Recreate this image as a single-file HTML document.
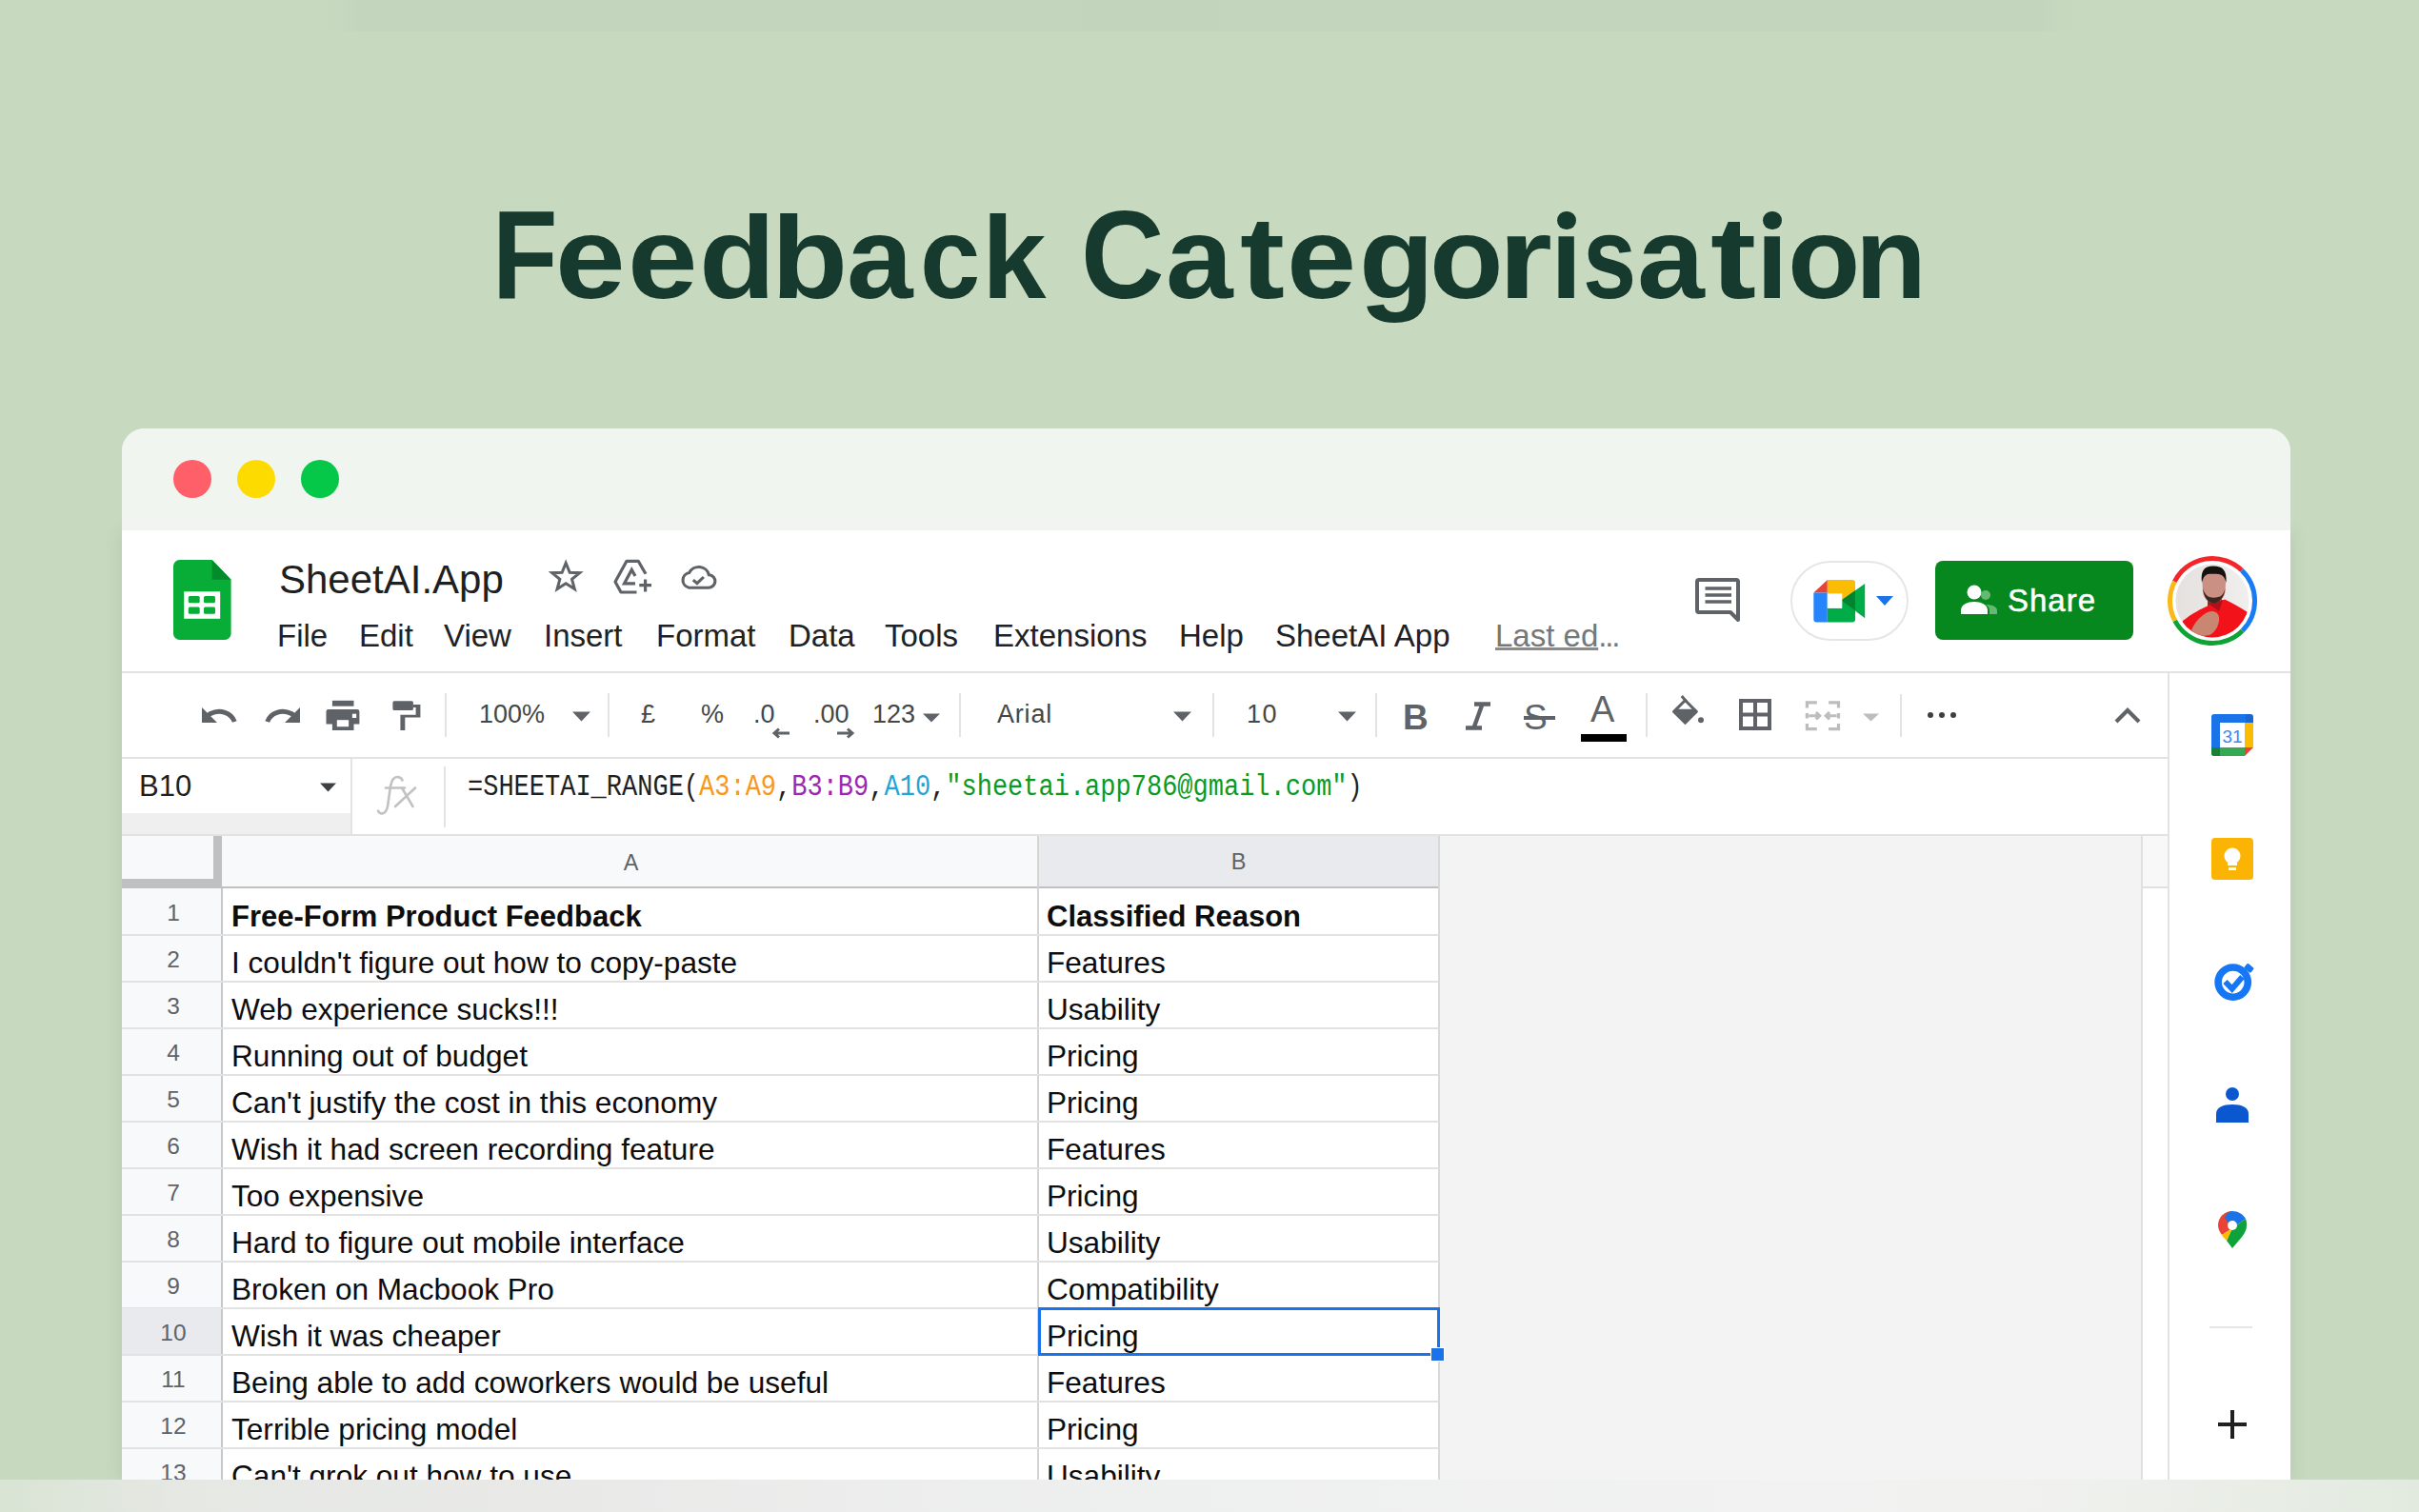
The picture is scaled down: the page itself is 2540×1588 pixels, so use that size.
<!DOCTYPE html>
<html><head><meta charset="utf-8">
<style>
*{margin:0;padding:0;box-sizing:border-box}
html,body{width:2540px;height:1588px;overflow:hidden}
body{position:relative;background:#c7dac0;font-family:"Liberation Sans",sans-serif;color:#202124}
.a{position:absolute}
.t{position:absolute;white-space:nowrap;line-height:1;-webkit-font-smoothing:antialiased}
.hl{position:absolute;background:#e2e2e2}
#topband{left:0;top:0;width:2540px;height:33px;background:linear-gradient(90deg,rgba(0,0,0,0) 0px,rgba(0,0,0,0) 340px,#c4d5bd 380px,#c3d4bc 1200px,#c4d5bd 2140px,rgba(0,0,0,0) 2180px)}
.tl{position:absolute;white-space:nowrap;line-height:1;font-weight:bold;color:#173a2e;transform-origin:0 0}
#win{left:128px;top:450px;width:2277px;height:1104px;background:#fff;border-radius:24px 24px 0 0;overflow:hidden}
#titlebar{left:0;top:0;width:2277px;height:107px;background:#f0f5f0}
.dot{position:absolute;width:40px;height:40px;border-radius:50%;top:33px}
#bottomband{left:0;top:1554px;width:2540px;height:34px;background:linear-gradient(90deg,#d9e4d4 0px,#e6e8e4 200px,#e9eae8 600px,#eeefef 1200px,#f2f2f2 1900px,#f0f1ee 2150px,#e2eadf 2540px)}
.menu{font-size:33px;color:#202124}
.cell{font-size:31.6px;color:#0d0d0d}
.rn{font-size:24.5px;color:#5f6368;text-align:center;width:104px}
.tb{font-size:27px;color:#444746}
.ic{position:absolute}
</style></head><body>
<div id="topband" class="a"></div>
<div id="ttl"><span class="tl" style="left:517.4px;top:202.2px;font-size:131px;transform:scaleX(0.855)">F</span><span class="tl" style="left:583.2px;top:208.7px;font-size:123px;transform:scaleX(1.076)">e</span><span class="tl" style="left:659.2px;top:208.7px;font-size:123px;transform:scaleX(1.075)">e</span><span class="tl" style="left:734.1px;top:208.7px;font-size:123px;transform:scaleX(1.068)">d</span><span class="tl" style="left:810.3px;top:208.7px;font-size:123px;transform:scaleX(1.066)">b</span><span class="tl" style="left:888.8px;top:208.7px;font-size:123px;transform:scaleX(1.017)">a</span><span class="tl" style="left:966.3px;top:208.7px;font-size:123px;transform:scaleX(0.927)">c</span><span class="tl" style="left:1030.8px;top:208.7px;font-size:123px;transform:scaleX(0.986)">k</span><span class="tl" style="left:1134.7px;top:202.2px;font-size:131px;transform:scaleX(0.926)">C</span><span class="tl" style="left:1224.1px;top:208.7px;font-size:123px;transform:scaleX(1.032)">a</span><span class="tl" style="left:1302.3px;top:208.7px;font-size:123px;transform:scaleX(1.146)">t</span><span class="tl" style="left:1351.0px;top:208.7px;font-size:123px;transform:scaleX(1.069)">e</span><span class="tl" style="left:1426.5px;top:208.7px;font-size:123px;transform:scaleX(1.050)">g</span><span class="tl" style="left:1501.0px;top:208.7px;font-size:123px;transform:scaleX(1.032)">o</span><span class="tl" style="left:1572.8px;top:208.7px;font-size:123px;transform:scaleX(1.189)">r</span><span class="tl" style="left:1628.1px;top:208.7px;font-size:123px;transform:scaleX(0.971)">ı</span><div class="a" style="left:1635.4px;top:221.7px;width:19.4px;height:19.4px;border-radius:50%;background:#173a2e"></div><span class="tl" style="left:1661.6px;top:208.7px;font-size:123px;transform:scaleX(0.821)">s</span><span class="tl" style="left:1718.5px;top:208.7px;font-size:123px;transform:scaleX(1.034)">a</span><span class="tl" style="left:1795.7px;top:208.7px;font-size:123px;transform:scaleX(1.173)">t</span><span class="tl" style="left:1844.0px;top:208.7px;font-size:123px;transform:scaleX(0.976)">ı</span><div class="a" style="left:1851.4px;top:221.7px;width:19.4px;height:19.4px;border-radius:50%;background:#173a2e"></div><span class="tl" style="left:1876.7px;top:208.7px;font-size:123px;transform:scaleX(1.017)">o</span><span class="tl" style="left:1948.2px;top:208.7px;font-size:123px;transform:scaleX(0.997)">n</span></div>

<div class="a" style="left:128px;top:560px;width:2277px;height:994px;box-shadow:0 0 16px 2px rgba(50,80,40,0.10)"></div>
<div id="win" class="a">
  <div id="titlebar" class="a">
    <div class="dot" style="left:54px;background:#ff5f69"></div>
    <div class="dot" style="left:121px;background:#fedb00"></div>
    <div class="dot" style="left:188px;background:#05c848"></div>
  </div>
</div>

<!-- header -->
<svg class="ic" style="left:182px;top:588px" width="61" height="85" viewBox="0 0 61 85">
  <path d="M6.6 0 H40.6 L60.6 20.8 V77.4 A6.6 6.6 0 0 1 54 84 H6.6 A6.6 6.6 0 0 1 0 77.4 V6.6 A6.6 6.6 0 0 1 6.6 0Z" fill="#07ad37"/>
  <path d="M40.6 0 V20.8 H60.6Z" fill="#038a2b"/>
  <rect x="11.2" y="33.3" width="38" height="28.5" fill="#fff"/>
  <rect x="15.8" y="38" width="11.9" height="7.2" rx="1.5" fill="#07ad37"/>
  <rect x="32" y="38" width="12" height="7.2" rx="1.5" fill="#07ad37"/>
  <rect x="15.8" y="49.5" width="11.9" height="7.2" rx="1.5" fill="#07ad37"/>
  <rect x="32" y="49.5" width="12" height="7.2" rx="1.5" fill="#07ad37"/>
</svg>
<div class="t" style="left:293px;top:588px;font-size:42px;color:#1f1f1f">SheetAI.App</div>

<div class="t menu" style="left:291px;top:651px">File</div>
<div class="t menu" style="left:377px;top:651px">Edit</div>
<div class="t menu" style="left:466px;top:651px">View</div>
<div class="t menu" style="left:571px;top:651px">Insert</div>
<div class="t menu" style="left:689px;top:651px">Format</div>
<div class="t menu" style="left:828px;top:651px">Data</div>
<div class="t menu" style="left:929px;top:651px">Tools</div>
<div class="t menu" style="left:1043px;top:651px">Extensions</div>
<div class="t menu" style="left:1238px;top:651px">Help</div>
<div class="t menu" style="left:1339px;top:651px">SheetAI App</div>
<div class="t menu" style="left:1570px;top:651px;color:#777"><span style="text-decoration:underline;text-decoration-thickness:2.5px;text-underline-offset:1px;text-decoration-color:#8a8a8a">Last ed</span><span style="letter-spacing:-2.2px">...</span></div>


<!-- header icons -->
<svg class="ic" style="left:574px;top:586px" width="40" height="38" viewBox="0 0 40 38">
  <g transform="matrix(0.88,0,0,0.883,2.59,2.59)"><path d="M20 3 L24.6 14.3 L36.5 14.8 L27.2 22.3 L30.4 34 L20 27.4 L9.6 34 L12.8 22.3 L3.5 14.8 L15.4 14.3Z" fill="none" stroke="#5f6368" stroke-width="3.4" stroke-linejoin="miter"/></g>
</svg>
<svg class="ic" style="left:642px;top:586px" width="46" height="40" viewBox="0 0 46 40">
  <path d="M36 16.8 L28.2 3.3 H16 L4 25 L10 36 H26.5" fill="none" stroke="#5f6368" stroke-width="3.2" stroke-linejoin="round"/>
  <path d="M25 19 L21.3 12.4 L13.5 26.8 H25" fill="none" stroke="#5f6368" stroke-width="3.2" stroke-linejoin="miter"/>
  <path d="M35.6 22.5 V35.5 M29.3 28.7 H42" fill="none" stroke="#5f6368" stroke-width="3.2"/>
</svg>
<svg class="ic" style="left:713px;top:591px" width="42" height="30" viewBox="0 0 42 30">
  <g transform="matrix(0.923,0,0,0.89,0.954,3)"><path d="M10 26 H32 A7.5 7.5 0 0 0 33 11 A12 12 0 0 0 10.5 8.5 A9 9 0 0 0 10 26Z" fill="none" stroke="#5f6368" stroke-width="3.4"/>
  <path d="M15 17 L19.5 21 L27 13.5" fill="none" stroke="#5f6368" stroke-width="3.4"/></g>
</svg>

<!-- comment icon -->
<svg class="ic" style="left:1779px;top:605px" width="51" height="50" viewBox="0 0 51 50">
  <path d="M5 4 H44 A2 2 0 0 1 46 6 V46 L38 38 H5 A2 2 0 0 1 3 36 V6 A2 2 0 0 1 5 4Z" fill="none" stroke="#5f6368" stroke-width="4" stroke-linejoin="round"/>
  <path d="M11.5 13 H39 M11.5 20 H39 M11.5 27 H39" stroke="#5f6368" stroke-width="3.4"/>
</svg>

<!-- meet pill -->
<div class="a" style="left:1880px;top:589px;width:124px;height:84px;border:2.5px solid #e6e6e6;border-radius:42px"></div>
<svg class="ic" style="left:1904px;top:607px" width="58" height="48" viewBox="0 0 58 48">
  <path d="M0.35 15.4 L14.8 1.9 V15.4Z" fill="#ea4335"/>
  <path d="M14.8 1.9 H41 A3 3 0 0 1 44 4.9 V23.6 H14.8Z" fill="#fbbc04"/>
  <path d="M0.35 15.4 H14.8 V46.4 H3.35 A3 3 0 0 1 0.35 43.4Z" fill="#2684fc"/>
  <path d="M14.8 23.6 H44 V43.4 A3 3 0 0 1 41 46.4 H14.8Z" fill="#00ac47"/>
  <path d="M29.4 23.6 L54.2 6 V42.2Z" fill="#00ac47"/>
  <path d="M29.4 23.6 L44 13.2 V34Z" fill="#00832d"/>
  <rect x="14.8" y="16.4" width="15.5" height="15.5" fill="#fff"/>
</svg>
<svg class="ic" style="left:1969px;top:625px" width="20" height="12" viewBox="0 0 20 12"><path d="M1 1 H19 L10 11Z" fill="#1a73e8"/></svg>

<!-- share -->
<div class="a" style="left:2032px;top:589px;width:208px;height:83px;background:#07881f;border-radius:8px"></div>
<svg class="ic" style="left:2056px;top:612px" width="44" height="36" viewBox="0 0 44 36">
  <circle cx="17" cy="10" r="7.5" fill="#fff"/>
  <path d="M3 33 V29 C3 23 10 20 17 20 C24 20 31 23 31 29 V33Z" fill="#fff"/>
  <circle cx="29" cy="13" r="5" fill="#7dc58a" opacity="0.8"/>
  <path d="M33 33 V29 C33 26 31 24 29 23 C35 23 41 25 41 29 V33Z" fill="#7dc58a" opacity="0.8"/>
</svg>
<div class="t" style="left:2108px;top:614px;font-size:33px;color:#fff;-webkit-text-stroke:0.5px #fff;letter-spacing:1px">Share</div>

<!-- avatar -->
<svg class="ic" style="left:2274px;top:582px" width="98" height="98" viewBox="0 0 98 98">
  <defs><clipPath id="avc"><circle cx="49" cy="49" r="38.5"/></clipPath>
  <linearGradient id="avbg" x1="0" x2="1" y1="0" y2="0"><stop offset="0" stop-color="#e2dfdc"/><stop offset="1" stop-color="#f2f1ef"/></linearGradient></defs>
  <g fill="none" stroke-width="5">
  <path d="M9.35 28.8 A44.5 44.5 0 0 1 79.9 17" stroke="#f4262a"/>
  <path d="M79.9 17 A44.5 44.5 0 0 1 80.5 80.5" stroke="#1a7cf2"/>
  <path d="M80.5 80.5 A44.5 44.5 0 0 1 9.7 69.9" stroke="#0fa336"/>
  <path d="M9.7 69.9 A44.5 44.5 0 0 1 9.35 28.8" stroke="#fbb81b"/>
  </g>
  <g clip-path="url(#avc)">
    <rect x="0" y="0" width="98" height="98" fill="url(#avbg)"/>
    <path d="M44 44 H59 V56 H44Z" fill="#7a3a30"/>
    <path d="M12 100 L18 70 C28 62 38 57 45 54 L62 47.5 C70 51 78 56 86 61 L94 100Z" fill="#f2121a"/>
    <path d="M45 52 L60 48 L56 60 Z" fill="#b0101a"/>
    <path d="M27 80 C30 72 36 66 42 62 C48 58 55 60 56 66 C57 74 52 82 46 85 C38 87 31 85 27 80Z" fill="#c98670"/>
    <path d="M38.5 30 C38 22 42 17 50.5 17 C59 17 63.5 22 63 30 L62.5 40 C61 47 56 51 50.5 51 C45 51 40 47 39 40Z" fill="#c99083"/>
    <path d="M39 36 C40 45 44 51 50.5 51.5 C57 51 61.5 45 62.5 36 C61 42 58 45 55 45 C52 46 49 46 46 45 C43 44 40.5 41 39 36Z" fill="#3e2620"/>
    <path d="M38 30 C36.5 18 40 12.5 50 12.5 C60 12.5 64.5 17 63.5 30 C62 24 60 22 56 21 C52 20.5 47 20.5 44 21 C41 22 39 25 38 30Z" fill="#17120f"/>
  </g>
</svg>

<div class="hl" style="left:128px;top:705px;width:2277px;height:2px"></div>

<!-- toolbar -->
<!-- toolbar icons -->
<svg class="ic" style="left:210px;top:740px" width="42" height="22" viewBox="0 0 42 22">
  <path d="M36.3 18 C33 8.5 21 4.5 11 9.5 L7.5 12" fill="none" stroke="#5f6368" stroke-width="5"/>
  <path d="M2 3 V19 H18 Z" fill="#5f6368"/>
</svg>
<svg class="ic" style="left:275px;top:740px" width="42" height="22" viewBox="0 0 42 22">
  <path d="M5.7 18 C9 8.5 21 4.5 31 9.5 L34.5 12" fill="none" stroke="#5f6368" stroke-width="5"/>
  <path d="M40 3 V19 H24 Z" fill="#5f6368"/>
</svg>
<svg class="ic" style="left:342px;top:735px" width="37" height="33" viewBox="0 0 37 33">
  <rect x="6.9" y="0.8" width="22.6" height="5.9" fill="#5f6368"/>
  <path d="M3 9.9 H33 A2.4 2.4 0 0 1 35.4 12.3 V25.5 H29.5 V31.9 H6.9 V25.5 H0.5 V12.3 A2.4 2.4 0 0 1 3 9.9Z" fill="#5f6368"/>
  <rect x="11.8" y="21.2" width="12.3" height="7" fill="#fff"/>
  <rect x="27.9" y="14.7" width="4.3" height="4.3" fill="#fff"/>
</svg>
<svg class="ic" style="left:412px;top:736px" width="31" height="32" viewBox="0 0 31 32">
  <rect x="0.4" y="0.3" width="21.5" height="9.7" rx="1.5" fill="#5f6368"/>
  <path d="M21.9 4 H29.4 V17.5 H13.3 V31 H8.4 V14.8 H24.6 V7 H21.9Z" fill="#5f6368"/>
</svg>
<div class="a" style="left:467px;top:728px;width:2px;height:46px;background:#e3e3e3"></div>
<div class="t tb" style="left:503px;top:737px">100%</div>
<svg class="ic" style="left:601px;top:747px" width="19" height="11" viewBox="0 0 19 11"><path d="M0 0.5 H19 L9.5 10.5Z" fill="#5f6368"/></svg>
<div class="a" style="left:638px;top:728px;width:2px;height:46px;background:#e3e3e3"></div>
<div class="t tb" style="left:673px;top:737px">£</div>
<div class="t tb" style="left:736px;top:737px">%</div>
<div class="t tb" style="left:791px;top:737px">.0</div>
<svg class="ic" style="left:810px;top:764px" width="19" height="12" viewBox="0 0 19 12"><path d="M19 6 H5 M8 1.5 L3 6 L8 10.5" fill="none" stroke="#5f6368" stroke-width="3"/></svg>
<div class="t tb" style="left:854px;top:737px">.00</div>
<svg class="ic" style="left:879px;top:764px" width="19" height="12" viewBox="0 0 19 12"><path d="M0 6 H14 M11 1.5 L16 6 L11 10.5" fill="none" stroke="#5f6368" stroke-width="3"/></svg>
<div class="t tb" style="left:916px;top:737px">123</div>
<svg class="ic" style="left:969px;top:749px" width="18" height="10" viewBox="0 0 18 10"><path d="M0 0.5 H18 L9 9.5Z" fill="#5f6368"/></svg>
<div class="a" style="left:1007px;top:728px;width:2px;height:46px;background:#e3e3e3"></div>
<div class="t tb" style="left:1047px;top:737px;letter-spacing:0.8px">Arial</div>
<svg class="ic" style="left:1232px;top:747px" width="19" height="11" viewBox="0 0 19 11"><path d="M0 0.5 H19 L9.5 10.5Z" fill="#5f6368"/></svg>
<div class="a" style="left:1273px;top:728px;width:2px;height:46px;background:#e3e3e3"></div>
<div class="t tb" style="left:1309px;top:737px;letter-spacing:1.5px">10</div>
<svg class="ic" style="left:1405px;top:747px" width="19" height="11" viewBox="0 0 19 11"><path d="M0 0.5 H19 L9.5 10.5Z" fill="#5f6368"/></svg>
<div class="a" style="left:1444px;top:728px;width:2px;height:46px;background:#e3e3e3"></div>
<div class="t" style="left:1473px;top:735px;font-size:37px;font-weight:bold;color:#5f6368">B</div>
<svg class="ic" style="left:1537px;top:737px" width="30" height="30" viewBox="0 0 30 30"><path d="M11 2.5 H28 M2 27.5 H19 M19.5 2.5 L10.5 27.5" fill="none" stroke="#5f6368" stroke-width="4.4"/></svg>
<div class="t" style="left:1600px;top:735px;font-size:37px;color:#5f6368">S</div>
<div class="a" style="left:1600px;top:752px;width:33px;height:3.5px;background:#5f6368"></div>
<div class="t" style="left:1670px;top:726px;font-size:38px;color:#5f6368">A</div>
<div class="a" style="left:1660px;top:771px;width:48px;height:8px;background:#000"></div>
<div class="a" style="left:1728px;top:728px;width:2px;height:46px;background:#e3e3e3"></div>
<svg class="ic" style="left:1756px;top:730px" width="36" height="32" viewBox="0 0 36 32">
  <path d="M13.5 5.5 L25.3 17.4 L13.5 29.3 L1.6 17.4Z" fill="none" stroke="#5f6368" stroke-width="3" stroke-linejoin="round"/>
  <path d="M2.5 16.5 L4.5 14.8 H22.5 L24.4 16.5 L13.5 28.4Z" fill="#5f6368"/>
  <path d="M9.8 1 L14.5 6.5" stroke="#5f6368" stroke-width="3"/>
  <circle cx="30" cy="26.3" r="3" fill="#5f6368"/>
</svg>
<svg class="ic" style="left:1826px;top:734px" width="34" height="33" viewBox="0 0 34 33">
  <path d="M2 2 H32 V31 H2Z M17 2 V31 M2 16.5 H32" fill="none" stroke="#5f6368" stroke-width="4"/>
</svg>
<svg class="ic" style="left:1894px;top:734px" width="39" height="34" viewBox="0 0 39 34">
  <g fill="none" stroke="#bdbdbd" stroke-width="3.4" transform="matrix(0.946,0,0,0.924,1.5,2)">
  <path d="M2 8 V2 H13 M26 2 H37 V8 M2 26 V32 H13 M26 32 H37 V26"/>
  <path d="M2 14 V20 M37 14 V20"/>
  <path d="M4 17 H15 M12 13 L16 17 L12 21 M35 17 H24 M27 13 L23 17 L27 21"/>
  </g>
</svg>
<svg class="ic" style="left:1956px;top:749px" width="17" height="9" viewBox="0 0 17 9"><path d="M0 0.5 H17 L8.5 8.5Z" fill="#bdbdbd"/></svg>
<div class="a" style="left:1995px;top:729px;width:2px;height:45px;background:#e3e3e3"></div>
<svg class="ic" style="left:2022px;top:746px" width="34" height="10" viewBox="0 0 34 10">
  <circle cx="5" cy="5" r="3" fill="#3c4043"/><circle cx="17" cy="5" r="3" fill="#3c4043"/><circle cx="29" cy="5" r="3" fill="#3c4043"/>
</svg>
<svg class="ic" style="left:2219px;top:741px" width="30" height="20" viewBox="0 0 30 20"><path d="M3 17 L15 5 L27 17" fill="none" stroke="#5f6368" stroke-width="4.2"/></svg>


<!-- formula bar -->
<div class="a" style="left:128px;top:854px;width:241px;height:23px;background:#efefef"></div>
<div class="t" style="left:146px;top:810px;font-size:31px;color:#1f1f1f">B10</div>
<svg class="ic" style="left:336px;top:822px" width="17" height="10" viewBox="0 0 17 10"><path d="M0 0.5 H17 L8.5 9.5Z" fill="#3c4043"/></svg>
<div class="a" style="left:368px;top:796px;width:2px;height:81px;background:#e3e3e3"></div>
<svg class="ic" style="left:370px;top:796px" width="90" height="80" viewBox="0 0 90 80"><g fill="none" stroke="#c2c2c2" stroke-width="2.6" stroke-linecap="round"><path d="M27 55.5 C29 60 35 60 37 51 L40 30 C41.5 22 44 19.5 48 20 C50.5 20.5 52 22 52.5 23.5"/><path d="M35 31.5 H55"/><path d="M45 51 L66 31.5 M52 31.5 L63.5 51"/></g></svg>
<div class="a" style="left:466px;top:805px;width:2px;height:64px;background:#e3e3e3"></div>
<div class="t" style="left:491px;top:811px;font-size:27px;font-family:'Liberation Mono',monospace;color:#1f1f1f;transform:scaleY(1.18);transform-origin:0 0">=SHEETAI_RANGE(<span style="color:#f7981d">A3:A9</span>,<span style="color:#9c27b0">B3:B9</span>,<span style="color:#1fa6d6">A10</span>,<span style="color:#0b9a1f">"sheetai.app786@gmail.com"</span>)</div>

<!-- grid -->
<div class="a" style="left:128px;top:877px;width:2121px;height:677px;background:#f3f3f3"></div>
<div class="a" style="left:2249px;top:877px;width:28px;height:677px;background:#fff"></div>
<div class="a" style="left:2249px;top:877px;width:28px;height:55px;background:#f8f8f8"></div>
<div class="hl" style="left:2248px;top:877px;width:2px;height:677px;background:#e0e0e0"></div>
<div class="hl" style="left:2249px;top:931px;width:28px;height:2px;background:#e0e0e0"></div>
<!-- white cells area -->
<div class="a" style="left:233px;top:933px;width:1278px;height:621px;background:#fff"></div>
<!-- row header column -->
<div class="a" style="left:128px;top:877px;width:104px;height:677px;background:#f8f9fa"></div>
<!-- col headers -->
<div class="a" style="left:233px;top:877px;width:857px;height:55px;background:#f8f9fa"></div>
<div class="a" style="left:1090px;top:877px;width:421px;height:55px;background:#e8eaed"></div>
<div class="t" style="left:233px;top:895px;width:859px;text-align:center;font-size:23.5px;color:#5f6368">A</div>
<div class="t" style="left:1090px;top:894px;width:421px;text-align:center;font-size:23.5px;color:#5f6368">B</div>
<!-- frozen handles -->
<div class="a" style="left:224px;top:877px;width:9px;height:56px;background:#c0c0c0"></div>
<div class="a" style="left:128px;top:923px;width:105px;height:10px;background:#c0c0c0"></div>
<div class="a" style="left:232px;top:933px;width:2px;height:621px;background:#c7c7c7"></div>
<div class="a" style="left:233px;top:931px;width:1278px;height:2px;background:#c0c0c0"></div>
<div class="a" style="left:1089px;top:877px;width:2px;height:677px;background:#d4d4d4"></div>
<div class="a" style="left:1510px;top:877px;width:2px;height:677px;background:#d9d9d9"></div>
<div class="a" style="left:128px;top:981px;width:1383px;height:2px;background:#e2e2e2"></div>
<div class="t rn" style="left:130px;top:947px">1</div>
<div class="t cell" style="left:243px;top:947px;font-weight:bold;font-size:31px;">Free-Form Product Feedback</div>
<div class="t cell" style="left:1099px;top:947px;font-weight:bold;font-size:31px;">Classified Reason</div>
<div class="a" style="left:128px;top:1030px;width:1383px;height:2px;background:#e2e2e2"></div>
<div class="t rn" style="left:130px;top:996px">2</div>
<div class="t cell" style="left:243px;top:996px;">I couldn't figure out how to copy-paste</div>
<div class="t cell" style="left:1099px;top:996px;">Features</div>
<div class="a" style="left:128px;top:1079px;width:1383px;height:2px;background:#e2e2e2"></div>
<div class="t rn" style="left:130px;top:1045px">3</div>
<div class="t cell" style="left:243px;top:1045px;">Web experience sucks!!!</div>
<div class="t cell" style="left:1099px;top:1045px;">Usability</div>
<div class="a" style="left:128px;top:1128px;width:1383px;height:2px;background:#e2e2e2"></div>
<div class="t rn" style="left:130px;top:1094px">4</div>
<div class="t cell" style="left:243px;top:1094px;">Running out of budget</div>
<div class="t cell" style="left:1099px;top:1094px;">Pricing</div>
<div class="a" style="left:128px;top:1177px;width:1383px;height:2px;background:#e2e2e2"></div>
<div class="t rn" style="left:130px;top:1143px">5</div>
<div class="t cell" style="left:243px;top:1143px;">Can't justify the cost in this economy</div>
<div class="t cell" style="left:1099px;top:1143px;">Pricing</div>
<div class="a" style="left:128px;top:1226px;width:1383px;height:2px;background:#e2e2e2"></div>
<div class="t rn" style="left:130px;top:1192px">6</div>
<div class="t cell" style="left:243px;top:1192px;">Wish it had screen recording feature</div>
<div class="t cell" style="left:1099px;top:1192px;">Features</div>
<div class="a" style="left:128px;top:1275px;width:1383px;height:2px;background:#e2e2e2"></div>
<div class="t rn" style="left:130px;top:1241px">7</div>
<div class="t cell" style="left:243px;top:1241px;">Too expensive</div>
<div class="t cell" style="left:1099px;top:1241px;">Pricing</div>
<div class="a" style="left:128px;top:1324px;width:1383px;height:2px;background:#e2e2e2"></div>
<div class="t rn" style="left:130px;top:1290px">8</div>
<div class="t cell" style="left:243px;top:1290px;">Hard to figure out mobile interface</div>
<div class="t cell" style="left:1099px;top:1290px;">Usability</div>
<div class="a" style="left:128px;top:1373px;width:1383px;height:2px;background:#e2e2e2"></div>
<div class="t rn" style="left:130px;top:1339px">9</div>
<div class="t cell" style="left:243px;top:1339px;">Broken on Macbook Pro</div>
<div class="t cell" style="left:1099px;top:1339px;">Compatibility</div>
<div class="a" style="left:128px;top:1374px;width:104px;height:48px;background:#e8eaed"></div>
<div class="a" style="left:128px;top:1422px;width:1383px;height:2px;background:#e2e2e2"></div>
<div class="t rn" style="left:130px;top:1388px">10</div>
<div class="t cell" style="left:243px;top:1388px;">Wish it was cheaper</div>
<div class="t cell" style="left:1099px;top:1388px;">Pricing</div>
<div class="a" style="left:128px;top:1471px;width:1383px;height:2px;background:#e2e2e2"></div>
<div class="t rn" style="left:130px;top:1437px">11</div>
<div class="t cell" style="left:243px;top:1437px;">Being able to add coworkers would be useful</div>
<div class="t cell" style="left:1099px;top:1437px;">Features</div>
<div class="a" style="left:128px;top:1520px;width:1383px;height:2px;background:#e2e2e2"></div>
<div class="t rn" style="left:130px;top:1486px">12</div>
<div class="t cell" style="left:243px;top:1486px;">Terrible pricing model</div>
<div class="t cell" style="left:1099px;top:1486px;">Pricing</div>
<div class="a" style="left:128px;top:1569px;width:1383px;height:2px;background:#e2e2e2"></div>
<div class="t rn" style="left:130px;top:1535px">13</div>
<div class="t cell" style="left:243px;top:1535px;">Can't grok out how to use</div>
<div class="t cell" style="left:1099px;top:1535px;">Usability</div>

<div class="a" style="left:1090px;top:1373px;width:422px;height:51px;border:3px solid #1a73e8"></div>
<div class="a" style="left:1502px;top:1415px;width:15px;height:15px;background:#1a73e8;border:1px solid #fff"></div>
<div class="hl" style="left:128px;top:795px;width:2149px;height:2px"></div>
<div class="hl" style="left:128px;top:876px;width:2149px;height:2px"></div>
<div class="hl" style="left:2276px;top:706px;width:2px;height:848px"></div>


<!-- side panel -->
<svg class="ic" style="left:2322px;top:750px" width="44" height="44" viewBox="0 0 44 44">
  <path d="M3 0 H36 V9 H9 V35 H0 V3 A3 3 0 0 1 3 0Z" fill="#1a73e8"/>
  <path d="M36 0 H41 A3 3 0 0 1 44 3 V9 H36Z" fill="#1967d2"/>
  <rect x="35" y="9" width="9" height="26" fill="#fbbc04"/>
  <path d="M0 35 H35 V44 H3 A3 3 0 0 1 0 41Z" fill="#34a853"/>
  <path d="M0 35 H9 V44 H3 A3 3 0 0 1 0 41Z" fill="#188038"/>
  <path d="M35 35 H44 L35 44Z" fill="#ea4335"/>
  <rect x="9" y="9" width="26" height="26" fill="#fff"/>
  <text x="22" y="30" text-anchor="middle" font-family="Liberation Sans" font-size="19" fill="#4285f4">31</text>
</svg>
<svg class="ic" style="left:2322px;top:880px" width="44" height="44" viewBox="0 0 44 44">
  <rect x="0" y="0" width="44" height="44" rx="4" fill="#fbb404"/>
  <circle cx="22" cy="19" r="8.5" fill="#fff"/>
  <rect x="17" y="25" width="10" height="4" fill="#fff"/>
  <rect x="18" y="31" width="8" height="3" fill="#fff"/>
</svg>
<svg class="ic" style="left:2322px;top:1010px" width="46" height="44" viewBox="0 0 46 44">
  <circle cx="22.7" cy="21.6" r="15.6" fill="none" stroke="#1677f5" stroke-width="7.6"/>
  <path d="M14.5 21 L21.7 28.5 L32.5 16" fill="none" stroke="#1677f5" stroke-width="6" stroke-linejoin="miter"/>
  <rect x="35" y="3.5" width="9" height="6.5" rx="1.5" transform="rotate(40 39.5 6.75)" fill="#1677f5"/>
</svg>
<svg class="ic" style="left:2326px;top:1141px" width="36" height="40" viewBox="0 0 36 40">
  <circle cx="18" cy="8" r="7" fill="#0b57d0"/>
  <path d="M1 38 V29 C1 22 8 19 18 19 C28 19 35 22 35 29 V38Z" fill="#0b57d0"/>
</svg>
<svg class="ic" style="left:2327px;top:1270px" width="34" height="42" viewBox="0 0 34 42">
  <path d="M17 2 C8 2 2 9 2 17 C2 21 4 24 6 27 L17 20Z" fill="#ea4335"/>
  <path d="M17 2 C23 2 28 5 31 10 L17 20 L9 9 C11 4 14 2 17 2Z" fill="#1a73e8"/>
  <path d="M31 10 C32 12 32 15 32 17 C32 25 26 30 17 41 L11 33 L17 20Z" fill="#0ea33a"/>
  <path d="M6 27 L17 20 L11 33 C9 31 7 29 6 27Z" fill="#fbbc04"/>
  <circle cx="17" cy="17" r="5" fill="#fff"/>
</svg>
<div class="a" style="left:2320px;top:1393px;width:45px;height:2px;background:#e6e6e6"></div>
<svg class="ic" style="left:2328px;top:1480px" width="32" height="32" viewBox="0 0 32 32"><path d="M16 1 V31 M1 16 H31" stroke="#1f1f1f" stroke-width="4"/></svg>
<div id="bottomband" class="a"></div>
</body></html>
